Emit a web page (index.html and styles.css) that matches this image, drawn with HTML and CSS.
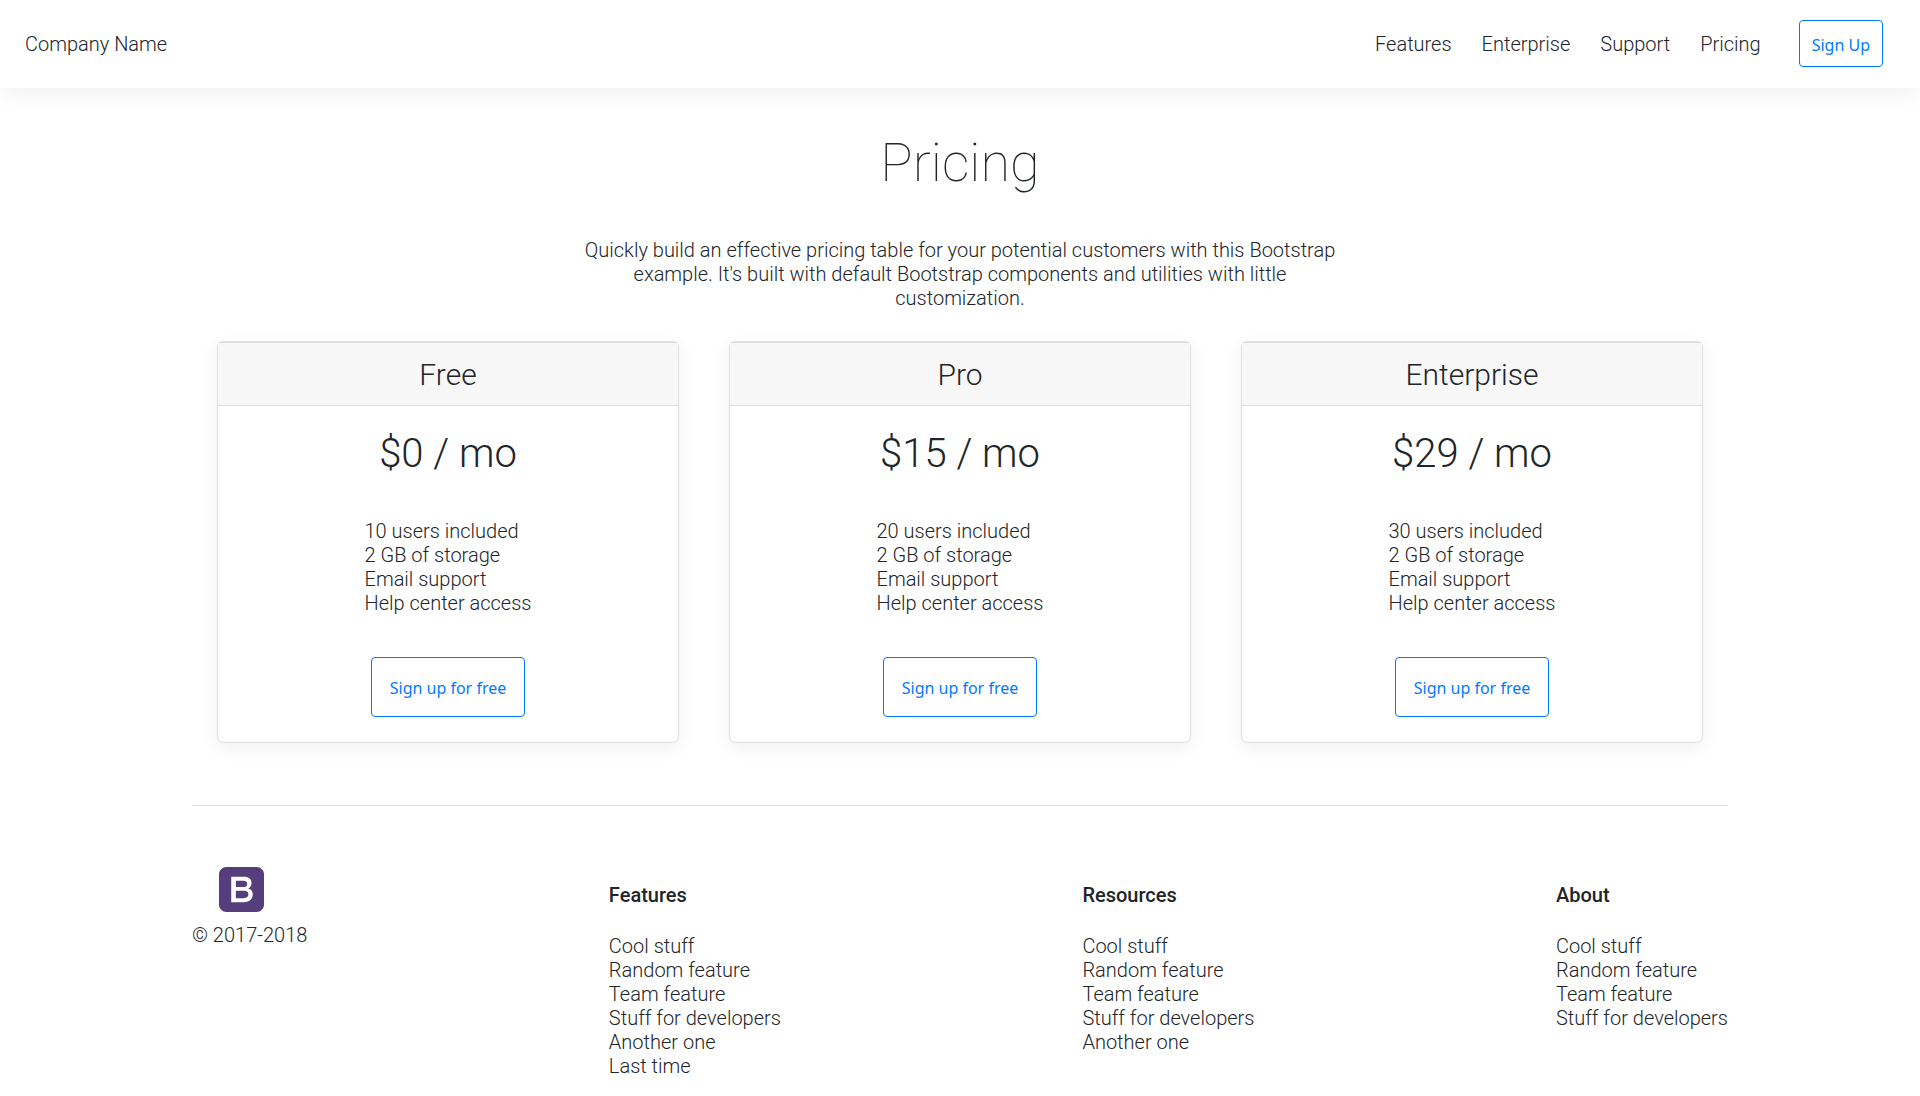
FILE: index.html
```html
<!DOCTYPE html>
<html lang="en">
<head>
<meta charset="utf-8">
<meta name="viewport" content="width=device-width, initial-scale=1">
<title>Pricing</title>
<link rel="stylesheet" href="styles.css">
</head>
<body>
<header class="topbar">
  <p class="brand">Company Name</p>
  <nav class="nav">
    <a href="#">Features</a>
    <a href="#">Enterprise</a>
    <a href="#">Support</a>
    <a href="#">Pricing</a>
  </nav>
  <button class="btn btn-nav" type="button">Sign Up</button>
</header>
<main class="content">
  <section class="intro">
    <h1>Pricing</h1>
    <p>Quickly build an effective pricing table for your potential customers with this Bootstrap example. It's built with default Bootstrap components and utilities with little customization.</p>
  </section>
  <section class="plans">
    <article class="card">
      <h2>Free</h2>
      <p class="price">$0 / mo</p>
      <ul>
        <li>10 users included</li>
        <li>2 GB of storage</li>
        <li>Email support</li>
        <li>Help center access</li>
      </ul>
      <button class="btn btn-plan" type="button">Sign up for free</button>
    </article>
    <article class="card">
      <h2>Pro</h2>
      <p class="price">$15 / mo</p>
      <ul>
        <li>20 users included</li>
        <li>2 GB of storage</li>
        <li>Email support</li>
        <li>Help center access</li>
      </ul>
      <button class="btn btn-plan" type="button">Sign up for free</button>
    </article>
    <article class="card">
      <h2>Enterprise</h2>
      <p class="price">$29 / mo</p>
      <ul>
        <li>30 users included</li>
        <li>2 GB of storage</li>
        <li>Email support</li>
        <li>Help center access</li>
      </ul>
      <button class="btn btn-plan" type="button">Sign up for free</button>
    </article>
  </section>
</main>
<footer class="footer">
  <div class="copyright">
    <svg class="logo" viewBox="0 0 612 612" aria-hidden="true">
      <path fill="#563d7c" d="M612 510c0 56.100-45.900 102-102 102H102C45.900 612 0 566.100 0 510V102C0 45.900 45.900 0 102 0h408c56.100 0 102 45.900 102 102v408z"/>
      <path fill="#fff" d="M166.300 133h173.500c64 0 102.600 28.900 102.600 87.900 0 31.200-15.300 55.800-43.700 69.300v1.200c38.100 8.100 60.700 39.200 60.700 82.400 0 49.500-34 104.300-127.500 104.300H166.300V133zm63.400 140.500h101.500c29.800 0 52.200-13.500 52.200-43.200 0-32.400-18.800-42.600-52.200-42.600H229.700v85.800zm0 149.800h110.500c38.100 0 60.200-19.800 60.200-52.200 0-31.800-23.600-48.600-60.200-48.600H229.700v100.800z"/>
    </svg>
    <p>© 2017-2018</p>
  </div>
  <div class="links">
    <h3>Features</h3>
    <ul>
      <li><a href="#">Cool stuff</a></li>
      <li><a href="#">Random feature</a></li>
      <li><a href="#">Team feature</a></li>
      <li><a href="#">Stuff for developers</a></li>
      <li><a href="#">Another one</a></li>
      <li><a href="#">Last time</a></li>
    </ul>
  </div>
  <div class="links">
    <h3>Resources</h3>
    <ul>
      <li><a href="#">Cool stuff</a></li>
      <li><a href="#">Random feature</a></li>
      <li><a href="#">Team feature</a></li>
      <li><a href="#">Stuff for developers</a></li>
      <li><a href="#">Another one</a></li>
    </ul>
  </div>
  <div class="links">
    <h3>About</h3>
    <ul>
      <li><a href="#">Cool stuff</a></li>
      <li><a href="#">Random feature</a></li>
      <li><a href="#">Team feature</a></li>
      <li><a href="#">Stuff for developers</a></li>
    </ul>
  </div>
</footer>
</body>
</html>
```
FILE: styles.css
```css
* {
  box-sizing: border-box;
  margin: 0;
  padding: 0;
}

body {
  color: #212529;
  background: #fff;
  font: 300 20px/24px Roboto, sans-serif;
}

a {
  color: inherit;
  text-decoration: none;
}

ul {
  list-style: none;
}

.topbar {
  display: flex;
  align-items: center;
  padding: 20px 37px 21px 25px;
  box-shadow: 0 5px 20px rgba(0, 0, 0, 0.06);
}

.nav {
  display: flex;
  gap: 30px;
  margin: 0 38px 0 auto;
}

.btn {
  color: #007bff;
  background: #fff;
  border: 1px solid #007bff;
  border-radius: 4px;
  font: 400 16px/20px "Noto Sans", sans-serif;
  cursor: pointer;
}

.btn-nav {
  padding: 14px 12px 11px;
}

.content,
.footer {
  width: 80%;
  margin: 0 auto;
}

.intro {
  text-align: center;
}

.intro h1 {
  padding: 42px 0 42px;
  font-size: 54px;
  font-weight: 100;
  line-height: 66px;
}

.intro p {
  max-width: 768px;
  margin: 0 auto;
}

.plans {
  display: grid;
  grid-template-columns: repeat(3, 1fr);
  gap: 50px;
  padding: 31px 25px 62px;
}

.card {
  display: flex;
  flex-direction: column;
  align-items: center;
  padding-bottom: 25px;
  border: 1px solid #dfdfdf;
  border-radius: 6px;
  box-shadow: 0 5px 20px rgba(0, 0, 0, 0.06);
}

.card h2 {
  align-self: stretch;
  padding: 14px 0 13px;
  background: #f7f7f7;
  border-top: 1px solid #dfdfdf;
  border-bottom: 1px solid #dfdfdf;
  font-size: 30px;
  font-weight: 300;
  line-height: 35px;
  text-align: center;
}

.price {
  padding: 24px 0 42px;
  font-size: 40px;
  line-height: 47px;
}

.btn-plan {
  margin-top: 42px;
  padding: 20px 18px 18px;
}

.footer {
  display: flex;
  justify-content: space-between;
  padding: 61px 0 20px;
  border-top: 1px solid #dfdfdf;
}

.logo {
  display: block;
  width: 45px;
  height: 45px;
  margin: 0 0 11px 27px;
}

.links h3 {
  padding: 16px 0 27px;
  font-size: 20px;
  font-weight: 500;
}
```
